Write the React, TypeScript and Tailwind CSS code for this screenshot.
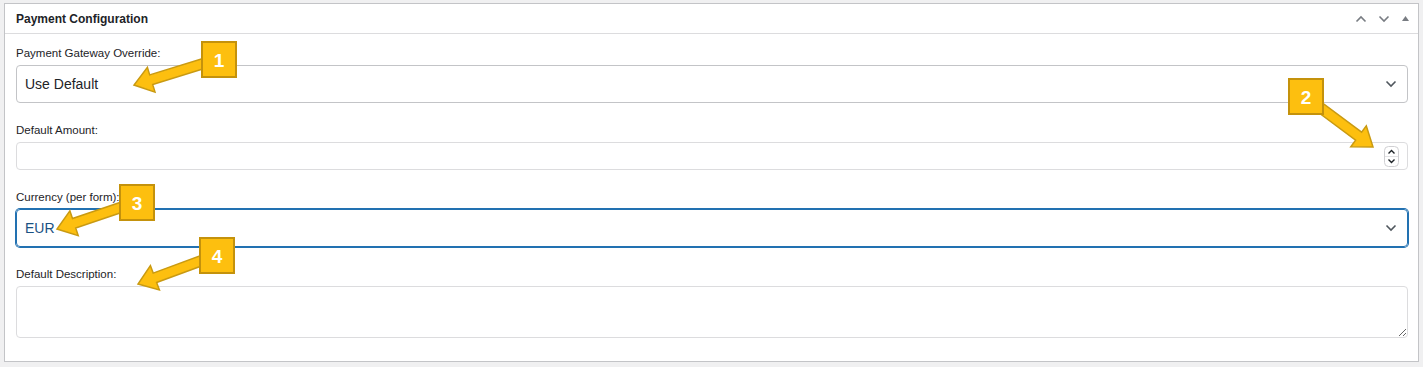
import React from "react";

const FONT = { fontFamily: '"Liberation Sans", Arial, sans-serif' };

// Annotation arrow polygon: shaft from start to tip with a triangular head.
function arrowPoints(sx: number, sy: number, tx: number, ty: number) {
  const dx = tx - sx;
  const dy = ty - sy;
  const len = Math.hypot(dx, dy);
  const ux = dx / len;
  const uy = dy / len;
  const nx = -uy;
  const ny = ux;
  const w = 5;
  const h = 13;
  const L = 18;
  const bx = tx - ux * L;
  const by = ty - uy * L;
  const pts = [
    [sx + nx * w, sy + ny * w],
    [bx + nx * w, by + ny * w],
    [bx + nx * h, by + ny * h],
    [tx, ty],
    [bx - nx * h, by - ny * h],
    [bx - nx * w, by - ny * w],
    [sx - nx * w, sy - ny * w],
  ];
  return pts.map((p) => `${p[0].toFixed(1)},${p[1].toFixed(1)}`).join(" ");
}

const callouts = [
  { n: "1", box: [201, 41], from: [215, 60], to: [134, 85] },
  { n: "2", box: [1288, 78], from: [1306, 97], to: [1373, 147] },
  { n: "3", box: [119, 184], from: [134, 203], to: [57, 229] },
  { n: "4", box: [199, 237], from: [214, 256], to: [138, 284] },
];

function Annotations() {
  return (
    <svg
      className="absolute left-0 top-0 pointer-events-none"
      width={1423}
      height={367}
      viewBox="0 0 1423 367"
    >
      {callouts.map((c) => (
        <polygon
          key={`a${c.n}`}
          points={arrowPoints(c.from[0], c.from[1], c.to[0], c.to[1])}
          fill="#fdbf0f"
          stroke="#c99a12"
          strokeWidth={1.5}
          strokeLinejoin="miter"
        />
      ))}
      {callouts.map((c) => (
        <g key={`b${c.n}`}>
          <rect
            x={c.box[0] + 1}
            y={c.box[1] + 1}
            width={34}
            height={35}
            fill="#fdbf0f"
            stroke="#c4920c"
            strokeWidth={2}
          />
          <text
            x={c.box[0] + 18}
            y={c.box[1] + 25.5}
            textAnchor="middle"
            fill="#ffffff"
            fontSize={19}
            fontWeight={700}
            fontFamily='"Liberation Sans", Arial, sans-serif'
          >
            {c.n}
          </text>
        </g>
      ))}
    </svg>
  );
}

function Chevron({ up = false, className = "" }: { up?: boolean; className?: string }) {
  return (
    <svg width="12" height="8" viewBox="0 0 12 8" className={className}>
      <path
        d={up ? "M1.5 6.5 L6 2 L10.5 6.5" : "M1.5 1.5 L6 6 L10.5 1.5"}
        fill="none"
        stroke="currentColor"
        strokeWidth="1.6"
      />
    </svg>
  );
}

function SelectBox({ value, focused = false }: { value: string; focused?: boolean }) {
  return (
    <div
      className={
        focused
          ? "flex h-[38px] items-center justify-between rounded-[4px] border border-[#2271b1] pl-[8px] pr-[10px] shadow-[0_0_0_1px_#2271b1] text-[#1a5183]"
          : "flex h-[38px] items-center justify-between rounded-[4px] border border-[#c3c4c7] pl-[8px] pr-[10px] text-[#1d2327]"
      }
    >
      <span className="text-[14px]">{value}</span>
      <Chevron className="text-[#50575e]" />
    </div>
  );
}

function Label({ children }: { children: React.ReactNode }) {
  return <div className="mb-[3px] text-[11.5px] leading-[18px] text-[#1d2327]">{children}</div>;
}

export default function App() {
  return (
    <div className="relative h-[367px] w-[1423px] bg-[#f0f0f1] px-[4px] pt-[3px]" style={FONT}>
      <div className="border border-[#c3c4c7] bg-white">
        <div className="flex h-[30px] items-center justify-between border-b border-[#dcdcde] pl-[11px] pr-[8px]">
          <h2 className="text-[12px] font-bold text-[#1d2327]">Payment Configuration</h2>
          <div className="flex items-center gap-[11px] text-[#787c82]">
            <Chevron up />
            <Chevron />
            <svg width="9" height="7" viewBox="0 0 9 7">
              <path d="M4.5 1 L8 6 L1 6 Z" fill="currentColor" />
            </svg>
          </div>
        </div>

        <div className="pl-[11px] pr-[10px] pt-[10px] pb-[23px]">
          <div className="mb-[18px]">
            <Label>Payment Gateway Override:</Label>
            <SelectBox value="Use Default" />
          </div>

          <div className="mb-[18px]">
            <Label>Default Amount:</Label>
            <div className="flex h-[28px] items-center justify-end rounded-[4px] border border-[#dcdcde] pr-[8px]">
              <svg width="15" height="21" viewBox="0 0 15 21">
                <rect x="0.5" y="0.5" width="14" height="20" rx="4" fill="#fff" stroke="#d0d0d3" />
                <line x1="1" y1="10.5" x2="14" y2="10.5" stroke="#e2e2e4" />
                <path d="M4.5 7.5 L7.5 4.5 L10.5 7.5" fill="none" stroke="#1d2327" strokeWidth="1.4" />
                <path d="M4.5 13.5 L7.5 16.5 L10.5 13.5" fill="none" stroke="#1d2327" strokeWidth="1.4" />
              </svg>
            </div>
          </div>

          <div className="mb-[18px]">
            <Label>Currency (per form):</Label>
            <SelectBox value="EUR" focused />
          </div>

          <div>
            <Label>Default Description:</Label>
            <textarea
              className="block h-[52px] w-full rounded-[4px] border border-[#dcdcde] bg-white"
              defaultValue=""
            />
          </div>
        </div>
      </div>
      <Annotations />
    </div>
  );
}
